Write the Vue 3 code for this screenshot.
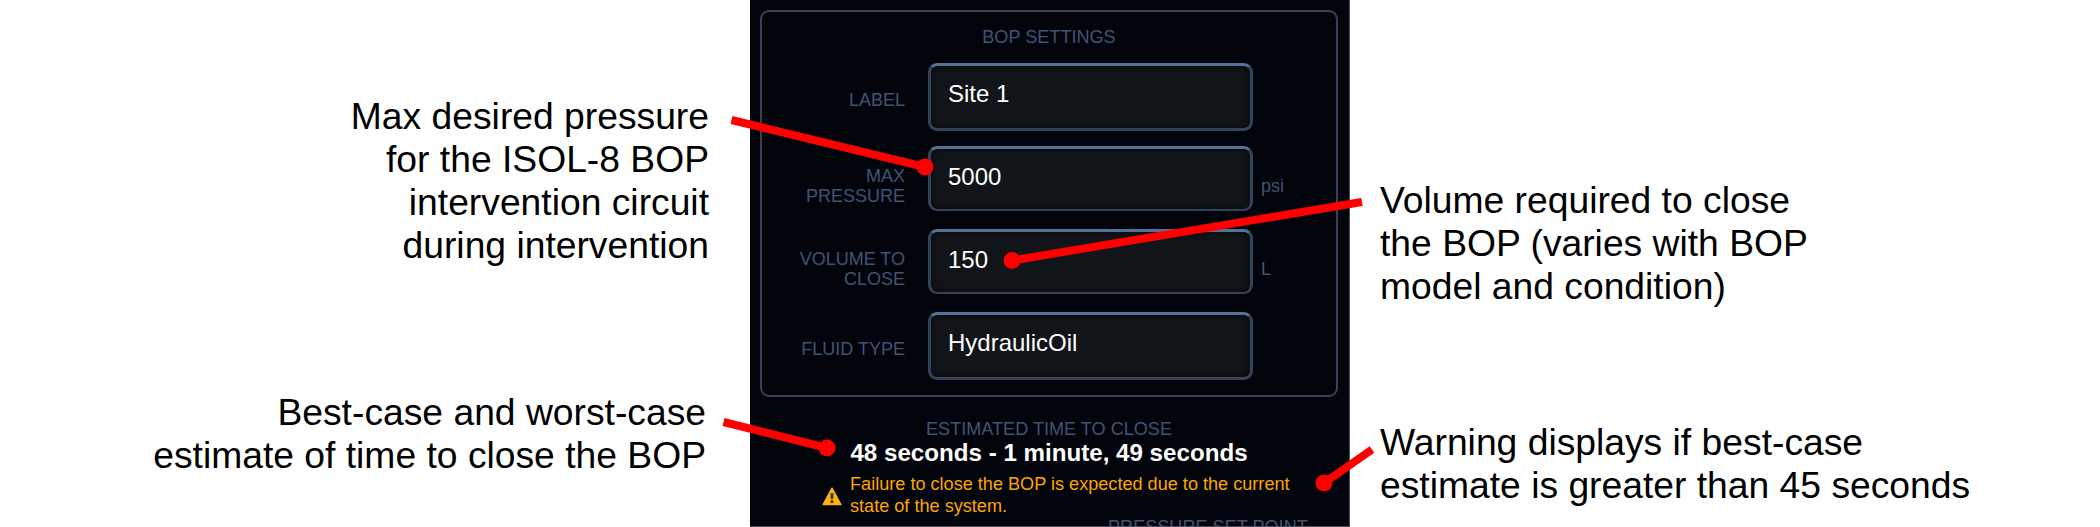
<script setup>
const fields = [
  { label: ['LABEL'], value: 'Site 1', unit: '' },
  { label: ['MAX', 'PRESSURE'], value: '5000', unit: 'psi' },
  { label: ['VOLUME TO', 'CLOSE'], value: '150', unit: 'L' },
  { label: ['FLUID TYPE'], value: 'HydraulicOil', unit: '' },
]
const notes = {
  pressure: ['Max desired pressure', 'for the ISOL-8 BOP', 'intervention circuit', 'during intervention'],
  time: ['Best-case and worst-case', 'estimate of time to close the BOP'],
  volume: ['Volume required to close', 'the BOP (varies with BOP', 'model and condition)'],
  warning: ['Warning displays if best-case', 'estimate is greater than 45 seconds'],
}
const pointers = [
  { x1: 731.5, y1: 120, x2: 925, y2: 167 },
  { x1: 1362, y1: 202, x2: 1012, y2: 260.5 },
  { x1: 723.5, y1: 422, x2: 827, y2: 448 },
  { x1: 1372, y1: 449.5, x2: 1324, y2: 483 },
]
</script>

<template>
  <div class="figure">
    <aside class="notes notes-left">
      <p class="note note-pressure"><span v-for="l in notes.pressure" :key="l">{{ l }}</span></p>
      <p class="note note-time"><span v-for="l in notes.time" :key="l">{{ l }}</span></p>
    </aside>

    <main class="panel">
      <section class="settings">
        <h2 class="caption">BOP SETTINGS</h2>
        <div
          v-for="f in fields"
          :key="f.value"
          class="row"
          :class="{ 'has-unit': f.unit }"
        >
          <div class="label"><span v-for="l in f.label" :key="l">{{ l }}</span></div>
          <div class="input">{{ f.value }}</div>
          <div class="unit">{{ f.unit }}</div>
        </div>
      </section>
      <section class="estimate">
        <h2 class="caption">ESTIMATED TIME TO CLOSE</h2>
        <div class="time">48 seconds - 1 minute, 49 seconds</div>
        <div class="alert">
          <svg class="alert-icon" viewBox="0 0 20 19" width="20" height="19">
            <path d="M10 1.2 L18.9 17.6 H1.1 Z" fill="#ffb30d" stroke="#ffb30d" stroke-width="1.4" stroke-linejoin="round" />
            <path d="M8.4 6.2 H11.6 L11.2 12 H8.8 Z" fill="#3a2a08" />
            <circle cx="10" cy="14.6" r="1.6" fill="#3a2a08" />
          </svg>
          <p class="alert-text">
            <span>Failure to close the BOP is expected due to the current</span>
            <span>state of the system.</span>
          </p>
        </div>
      </section>
      <h2 class="caption setpoint">PRESSURE SET POINT</h2>
    </main>

    <aside class="notes notes-right">
      <p class="note note-volume"><span v-for="l in notes.volume" :key="l">{{ l }}</span></p>
      <p class="note note-warning"><span v-for="l in notes.warning" :key="l">{{ l }}</span></p>
    </aside>

    <svg class="pointers" viewBox="0 0 2100 527" width="2100" height="527">
      <g v-for="p in pointers" :key="p.x1" stroke="#ff0000" fill="#ff0000">
        <line :x1="p.x1" :y1="p.y1" :x2="p.x2" :y2="p.y2" stroke-width="8" />
        <circle :cx="p.x2" :cy="p.y2" r="8.5" stroke="none" />
      </g>
    </svg>
  </div>
</template>

<style>
body {
  background: #fff;
}
</style>

<style scoped>
.figure {
  position: relative;
  display: flex;
  width: 2100px;
  height: 527px;
  overflow: hidden;
  background: #fff;
  font-family: 'Liberation Sans', Arial, sans-serif;
}
.figure * {
  box-sizing: border-box;
}
.pointers {
  position: absolute;
  top: 0;
  left: 0;
  pointer-events: none;
}
.notes {
  flex: 0 0 750px;
  display: flex;
  flex-direction: column;
}
.note {
  margin: 0;
  font-size: 37.25px;
  line-height: 43px;
  color: #000;
  white-space: nowrap;
}
.note span {
  display: block;
}
.notes-left {
  text-align: right;
  padding-top: 95px;
}
.note-pressure {
  padding-right: 41px;
}
.note-time {
  margin-top: 124px;
  padding-right: 44px;
}
.notes-right {
  padding-top: 179px;
  padding-left: 30px;
}
.note-warning {
  margin-top: 113px;
}
.panel {
  flex: 0 0 600px;
  height: 527px;
  overflow: hidden;
  padding: 10px 11px 0 10px;
  background: #01040b;
  border-right: 1px solid #4a4f58;
  border-bottom: 1px solid #4a4f58;
}
.caption {
  margin: 0;
  font-size: 18.1px;
  line-height: 20px;
  font-weight: 400;
  color: #405473;
  text-align: center;
  white-space: nowrap;
}
.settings {
  height: 387px;
  padding-top: 15px;
  border: 2px solid #33435c;
  border-radius: 9px;
}
.settings .caption {
  margin-bottom: 16px;
}
.row {
  display: grid;
  grid-template-columns: 143px 325px 1fr;
  column-gap: 23px;
  height: 68px;
  margin-bottom: 15px;
}
.has-unit {
  height: 65px;
  margin-bottom: 18px;
}
.label {
  padding-top: 28px;
  font-size: 18px;
  line-height: 19.5px;
  color: #405473;
  text-align: right;
}
.has-unit .label {
  padding-top: 21px;
}
.label span {
  display: block;
}
.input {
  padding: 14px 0 0 17px;
  border: 3px solid #33435c;
  border-top-color: #55739a;
  border-radius: 9px;
  background: #111418;
  box-shadow: inset 0 0 9px rgba(0, 0, 0, 0.55);
  font-size: 24px;
  line-height: 28px;
  color: #fff;
}
.has-unit .input {
  border-bottom-width: 2px;
}
.unit {
  margin-left: -15px;
  padding-top: 30px;
  font-size: 18px;
  line-height: 20px;
  color: #405473;
}
.estimate {
  padding-top: 22px;
}
.time {
  font-size: 24.15px;
  line-height: 28px;
  font-weight: 700;
  color: #fff;
  text-align: center;
}
.alert {
  display: flex;
  margin-top: 7px;
  padding-left: 62px;
}
.alert-icon {
  flex: none;
  margin: 13px 8px 0 0;
}
.alert-text {
  margin: 0;
  font-size: 18.13px;
  line-height: 21.5px;
  color: #ffa500;
  white-space: nowrap;
}
.alert-text span {
  display: block;
}
.setpoint {
  padding-left: 348px;
  text-align: left;
}
</style>
